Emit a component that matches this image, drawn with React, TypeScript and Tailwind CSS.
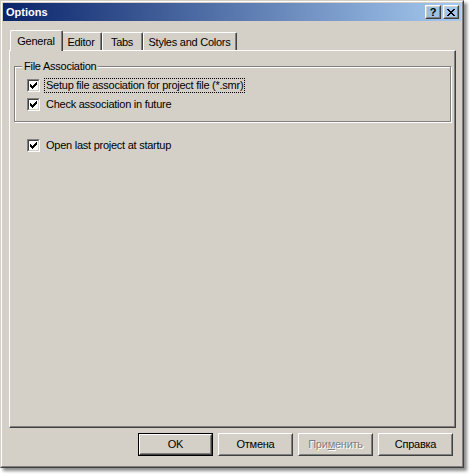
import type { ReactNode } from 'react';

const CheckMark = () => (
  <svg width="7" height="7" viewBox="0 0 7 7" shapeRendering="crispEdges">
    {[2, 3, 4, 3, 2, 1, 0].map((y, x) => (
      <rect key={x} x={x} y={y} width="1" height="3" fill="#000" />
    ))}
  </svg>
);

const Checkbox = () => (
  <div className="w-[13px] h-[13px] shrink-0 border border-t-[#808080] border-l-[#808080] border-r-white border-b-white">
    <div className="w-full h-full bg-white border border-t-[#404040] border-l-[#404040] border-r-[#d4d0c8] border-b-[#d4d0c8] flex items-center justify-center">
      <CheckMark />
    </div>
  </div>
);

const CheckRow = ({ label, focused }: { label: string; focused?: boolean }) => (
  <div className="h-[19px] flex items-center">
    <Checkbox />
    <span
      className={`ml-[4px] px-px leading-[13px] border ${focused ? 'border-dotted border-black' : 'border-transparent'}`}
    >
      {label}
    </span>
  </div>
);

// raised 3d frame used by push buttons and caption buttons
const Raised = ({ className, children }: { className: string; children: ReactNode }) => (
  <div className={`border border-t-white border-l-white border-r-[#404040] border-b-[#404040] ${className}`}>
    <div className="w-full h-full border border-t-[#d4d0c8] border-l-[#d4d0c8] border-r-[#808080] border-b-[#808080] flex items-center justify-center">
      {children}
    </div>
  </div>
);

const CloseGlyph = () => {
  const rows: [number, number][][] = [
    [[0, 2], [6, 2]],
    [[1, 2], [5, 2]],
    [[2, 4]],
    [[3, 2]],
    [[2, 4]],
    [[1, 2], [5, 2]],
    [[0, 2], [6, 2]],
  ];
  return (
    <svg width="8" height="7" viewBox="0 0 8 7" shapeRendering="crispEdges">
      {rows.map((segs, y) =>
        segs.map(([x, w], i) => <rect key={`${y}-${i}`} x={x} y={y} width={w} height="1" fill="#000" />)
      )}
    </svg>
  );
};

const Tab = ({ label, width, active }: { label: string; width: string; active?: boolean }) => (
  <div
    className={`${width} ${
      active ? 'h-[21px] -mb-px relative z-10 -mr-[2px]' : 'h-[18px]'
    } bg-[#d4d0c8] rounded-t-[2px] border-t border-l border-r border-t-white border-l-white border-r-[#404040] flex`}
  >
    <div className={`flex-1 border-r border-r-[#808080] flex justify-center ${active ? 'pt-[2px]' : 'pt-px'}`}>
      {label}
    </div>
  </div>
);

const PushButton = ({ children, isDefault }: { children: ReactNode; isDefault?: boolean }) =>
  isDefault ? (
    <div className="w-[75px] h-[23px] border border-black">
      <Raised className="w-full h-full">{children}</Raised>
    </div>
  ) : (
    <Raised className="w-[75px] h-[23px]">{children}</Raised>
  );

export default function App() {
  return (
    <div className="w-[470px] h-[476px] bg-white font-['Liberation_Sans',Arial,sans-serif] text-[11px] tracking-[-0.25px] text-black">
      <div className="w-[464px] h-[468px] bg-[#d4d0c8] border border-t-[#d4d0c8] border-l-[#d4d0c8] border-r-[#404040] border-b-[#404040] shadow-[3px_3px_3px_rgba(0,0,0,0.45)]">
        <div className="h-full border border-t-white border-l-white border-r-[#808080] border-b-[#808080] p-px flex flex-col">
          {/* title bar */}
          <div className="h-[18px] bg-[linear-gradient(to_right,#0a246a,#a6caf0)] flex items-center pl-[3px] pr-[2px]">
            <span className="text-white font-bold tracking-normal">Options</span>
            <div className="ml-auto flex gap-[2px]">
              <Raised className="w-[16px] h-[14px]">
                <span className="font-bold text-[11px] leading-none tracking-normal">?</span>
              </Raised>
              <Raised className="w-[16px] h-[14px]">
                <CloseGlyph />
              </Raised>
            </div>
          </div>

          <div className="flex-1 flex flex-col pl-[6px] pr-[5px] pt-[9px]">
            {/* tabs */}
            <div className="h-[20px] flex items-end pl-px">
              <Tab label="General" width="w-[53px]" active />
              <Tab label="Editor" width="w-[41px]" />
              <Tab label="Tabs" width="w-[41px]" />
              <Tab label="Styles and Colors" width="w-[94px]" />
            </div>

            {/* tab page */}
            <div className="h-[378px] border border-t-white border-l-white border-r-[#404040] border-b-[#404040]">
              <div className="h-full border-r border-b border-r-[#808080] border-b-[#808080] pl-[4px] pr-[3px] pt-[9px]">
                <fieldset className="border border-[#808080] shadow-[1px_1px_0_#fff,inset_1px_1px_0_#fff] pl-[12px] pt-[3px] pb-[7px]">
                  <legend className="ml-[-5px] px-[2px] bg-[#d4d0c8] leading-[13px]">File Association</legend>
                  <CheckRow label="Setup file association for project file (*.smr)" focused />
                  <CheckRow label="Check association in future" />
                </fieldset>
                <div className="mt-[14px] pl-[13px]">
                  <CheckRow label="Open last project at startup" />
                </div>
              </div>
            </div>

            {/* buttons */}
            <div className="flex justify-end gap-[5px] mt-[5px] pr-[3px]">
              <PushButton isDefault>OK</PushButton>
              <PushButton>Отмена</PushButton>
              <PushButton>
                <span className="text-[#808080] [text-shadow:1px_1px_0_#fff]">
                  При<span className="underline">м</span>енить
                </span>
              </PushButton>
              <PushButton>Справка</PushButton>
            </div>
          </div>
        </div>
      </div>
    </div>
  );
}
